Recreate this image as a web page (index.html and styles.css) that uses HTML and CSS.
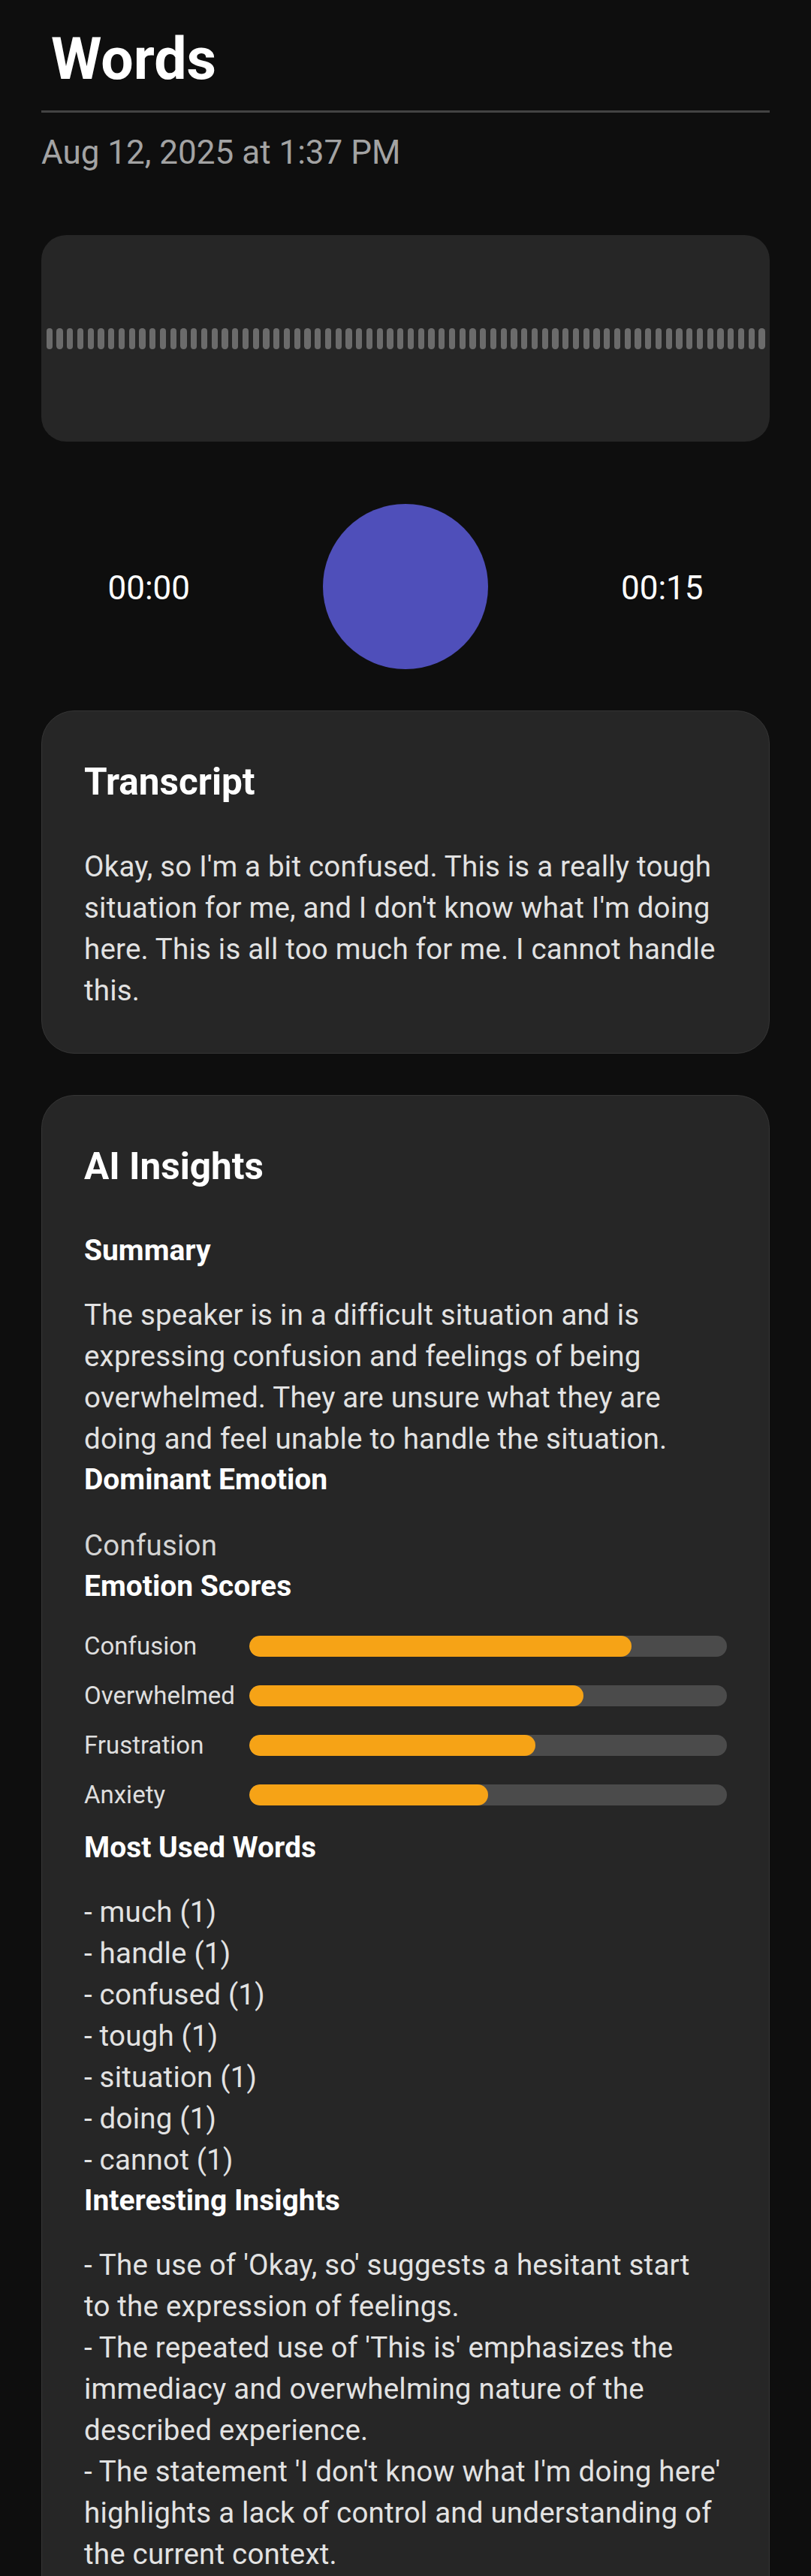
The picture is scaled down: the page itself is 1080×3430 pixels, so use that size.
FILE: index.html
```html
<!DOCTYPE html>
<html lang="en">
<head>
<meta charset="utf-8">
<title>Words</title>
<link rel="stylesheet" href="styles.css">
</head>
<body>
<div class="page">
  <h1 class="title">Words</h1>
  <div class="divider"></div>
  <div class="date">Aug 12, 2025 at 1:37 PM</div>

  <div class="wave">
    <div class="bar"></div><div class="bar"></div><div class="bar"></div><div class="bar"></div><div class="bar"></div><div class="bar"></div><div class="bar"></div><div class="bar"></div><div class="bar"></div><div class="bar"></div>
    <div class="bar"></div><div class="bar"></div><div class="bar"></div><div class="bar"></div><div class="bar"></div><div class="bar"></div><div class="bar"></div><div class="bar"></div><div class="bar"></div><div class="bar"></div>
    <div class="bar"></div><div class="bar"></div><div class="bar"></div><div class="bar"></div><div class="bar"></div><div class="bar"></div><div class="bar"></div><div class="bar"></div><div class="bar"></div><div class="bar"></div>
    <div class="bar"></div><div class="bar"></div><div class="bar"></div><div class="bar"></div><div class="bar"></div><div class="bar"></div><div class="bar"></div><div class="bar"></div><div class="bar"></div><div class="bar"></div>
    <div class="bar"></div><div class="bar"></div><div class="bar"></div><div class="bar"></div><div class="bar"></div><div class="bar"></div><div class="bar"></div><div class="bar"></div><div class="bar"></div><div class="bar"></div>
    <div class="bar"></div><div class="bar"></div><div class="bar"></div><div class="bar"></div><div class="bar"></div><div class="bar"></div><div class="bar"></div><div class="bar"></div><div class="bar"></div><div class="bar"></div>
    <div class="bar"></div><div class="bar"></div><div class="bar"></div><div class="bar"></div><div class="bar"></div><div class="bar"></div><div class="bar"></div><div class="bar"></div><div class="bar"></div><div class="bar"></div>
  </div>

  <div class="controls">
    <div class="time">00:00</div>
    <div class="play"></div>
    <div class="time">00:15</div>
  </div>

  <section class="card">
    <h2 class="card-title">Transcript</h2>
    <p class="text">Okay, so I'm a bit confused. This is a really tough situation for me, and I don't know what I'm doing here. This is all too much for me. I cannot handle this.</p>
  </section>

  <section class="card">
    <h2 class="card-title">AI Insights</h2>

    <h3 class="heading">Summary</h3>
    <p class="text">The speaker is in a difficult situation and is expressing confusion and feelings of being overwhelmed. They are unsure what they are doing and feel unable to handle the situation.</p>

    <h3 class="heading heading-dominant">Dominant Emotion</h3>
    <p class="text dominant">Confusion</p>

    <h3 class="heading heading-scores">Emotion Scores</h3>
    <div class="scores">
      <div class="score-row">
        <span class="score-label">Confusion</span>
        <div class="track"><div class="fill" style="width:80%"></div></div>
      </div>
      <div class="score-row">
        <span class="score-label">Overwhelmed</span>
        <div class="track"><div class="fill" style="width:70%"></div></div>
      </div>
      <div class="score-row">
        <span class="score-label">Frustration</span>
        <div class="track"><div class="fill" style="width:60%"></div></div>
      </div>
      <div class="score-row">
        <span class="score-label">Anxiety</span>
        <div class="track"><div class="fill" style="width:50%"></div></div>
      </div>
    </div>

    <h3 class="heading">Most Used Words</h3>
    <div class="text">
      <div>- much (1)</div>
      <div>- handle (1)</div>
      <div>- confused (1)</div>
      <div>- tough (1)</div>
      <div>- situation (1)</div>
      <div>- doing (1)</div>
      <div>- cannot (1)</div>
    </div>

    <h3 class="heading">Interesting Insights</h3>
    <div class="text">
      <div>- The use of 'Okay, so' suggests a hesitant start<br>to the expression of feelings.</div>
      <div>- The repeated use of 'This is' emphasizes the immediacy and overwhelming nature of the described experience.</div>
      <div>- The statement 'I don't know what I'm doing here' highlights a lack of control and understanding of the current context.</div>
    </div>
  </section>
</div>
</body>
</html>
```

FILE: styles.css
```css
* {
  box-sizing: border-box;
  margin: 0;
  padding: 0;
}

html,
body {
  background: #0e0e0e;
}

body {
  font-family: Roboto, "Noto Sans", "Liberation Sans", sans-serif;
  color: #ffffff;
}

.page {
  padding: 34px 55px 120px;
}

.title {
  font-size: 77px;
  line-height: 90px;
  font-weight: 700;
  padding-left: 13px;
}

.divider {
  height: 3px;
  background: #434343;
  margin-top: 23px;
}

.date {
  font-size: 44px;
  line-height: 52px;
  color: #a3a3a3;
  margin-top: 27px;
}

.wave {
  margin-top: 84px;
  height: 275px;
  background: #262626;
  border-radius: 33px;
  display: flex;
  align-items: center;
  justify-content: center;
}

.bar {
  flex: 0 0 8.25px;
  height: 28px;
  margin: 0 2.75px;
  background: #6b6b6b;
  border-radius: 4.2px;
}

.controls {
  margin-top: 83px;
  height: 220px;
  display: flex;
  align-items: center;
  justify-content: space-around;
}

.time {
  font-size: 44px;
  line-height: 52px;
  padding-top: 3px;
  color: #ffffff;
}

.play {
  width: 220px;
  height: 220px;
  border-radius: 50%;
  background: #4f4fba;
}

.card {
  margin-top: 55px;
  background: #262626;
  border: 1px solid #353535;
  border-radius: 44px;
  padding: 56px;
}

.card-title {
  font-size: 49.5px;
  line-height: 76px;
  font-weight: 700;
  margin-bottom: 47px;
}

.text {
  font-size: 38.5px;
  line-height: 55px;
  letter-spacing: 0.2px;
  color: #e2e2e2;
  font-weight: 400;
}

.heading {
  font-size: 39px;
  line-height: 55px;
  font-weight: 700;
  margin-bottom: 30px;
}

.heading-dominant {
  margin-bottom: 32px;
}

.dominant {
  color: #d4d4d4;
}

.scores {
  margin-top: -11px;
  margin-bottom: 10px;
}

.score-row {
  height: 66px;
  display: flex;
  align-items: center;
}

.score-label {
  flex: 0 0 219.5px;
  font-size: 33px;
  line-height: 44px;
  color: #dedede;
}

.track {
  flex: 1;
  height: 28px;
  background: #4b4b4b;
  border-radius: 14px;
  overflow: hidden;
}

.fill {
  height: 100%;
  background: #f6a316;
  border-radius: 14px;
}
```
